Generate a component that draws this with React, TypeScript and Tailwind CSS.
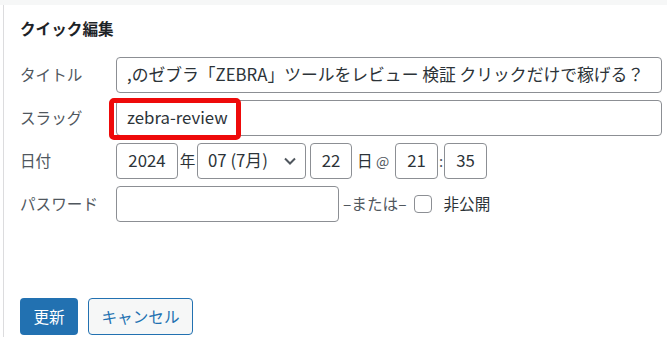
import React from "react";

const font = { fontFamily: '"Noto Sans CJK JP", "Noto Sans", sans-serif' };

function Label({ children }: { children: React.ReactNode }) {
  return (
    <div className="w-[96px] shrink-0 text-[15.6px] text-[#50575e] leading-none">{children}</div>
  );
}

const box =
  "h-[36px] border border-[#8c8f94] rounded-[4px] bg-white text-[16.8px] text-[#2c3338] flex items-center";

export default function App() {
  return (
    <div className="w-[667px] h-[337px] bg-white relative overflow-hidden" style={font}>
      <div className="h-[5px] bg-[#f6f7f7]" />
      <div className="ml-[3px] border-l border-[#dcdcde] h-[332px] pl-[16px] pr-[5px] pt-[14px] flex flex-col">
        <div className="h-[20px] flex items-center text-[15.6px] font-bold text-[#1d2327]">クイック編集</div>

        <div className="mt-[18px] flex flex-col gap-[7px]">
          <div className="flex items-center h-[36px]">
            <Label>タイトル</Label>
            <div className={`${box} flex-1 px-[10px] overflow-hidden whitespace-nowrap`}>
              ,のゼブラ「ZEBRA」ツールをレビュー 検証 クリックだけで稼げる？
            </div>
          </div>

          <div className="flex items-center h-[36px]">
            <Label>スラッグ</Label>
            <div className={`${box} flex-1 px-[10px]`}>zebra-review</div>
          </div>

          <div className="flex items-center h-[36px]">
            <Label>日付</Label>
            <div className={`${box} w-[62px] justify-center`}>2024</div>
            <span className="self-start mt-[6px] w-[19px] text-center text-[15.6px] text-[#2c3338]">年</span>
            <div className={`${box} w-[109px] pl-[10px] pr-[8px] justify-between`}>
              <span>07 (7月)</span>
              <svg width="14" height="14" viewBox="0 0 14 14">
                <path d="M2 4.5 L7 9.5 L12 4.5" fill="none" stroke="#50575e" strokeWidth="2" />
              </svg>
            </div>
            <div className={`${box} ml-[4px] w-[42px] justify-center`}>22</div>
            <span className="self-start mt-[6px] ml-[5px] w-[38px] text-[15.6px] text-[#2c3338] whitespace-nowrap">
              日 <span className="text-[14px] text-[#50575e]">@</span>
            </span>
            <div className={`${box} w-[43px] justify-center`}>21</div>
            <span className="w-[6px] text-center text-[15px] text-[#50575e]">:</span>
            <div className={`${box} w-[43px] justify-center`}>35</div>
          </div>

          <div className="flex items-center h-[36px]">
            <Label>パスワード</Label>
            <div className={`${box} w-[223px]`} />
            <span className="ml-[4px] text-[15.6px] text-[#50575e]">–または–</span>
            <span className="ml-[7px] w-[18px] h-[18px] border border-[#8c8f94] rounded-[4px] bg-white" />
            <span className="ml-[12px] text-[15.6px] text-[#2c3338]">非公開</span>
          </div>
        </div>

        <div className="mt-[76px] flex gap-[10px]">
          <button className="h-[37px] w-[58px] rounded-[4px] bg-[#2271b1] text-white text-[15.6px] flex items-center justify-center">
            更新
          </button>
          <button className="h-[37px] w-[105px] rounded-[4px] border border-[#2271b1] bg-[#f6f7f7] text-[#2271b1] text-[15.6px] flex items-center justify-center">
            キャンセル
          </button>
        </div>
      </div>

      <div className="absolute left-[109px] top-[98px] w-[132px] h-[42px] border-[5px] border-[#ee0a0a] rounded-[5px]" />
    </div>
  );
}
